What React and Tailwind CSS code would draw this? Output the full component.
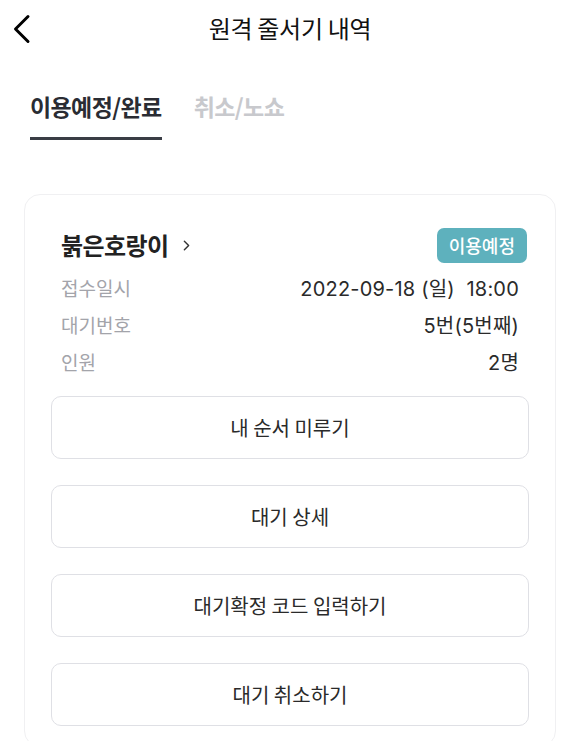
import { ChevronRight } from 'lucide-react';

export default function App() {
  const rows = [
    { label: '접수일시', value: '2022-09-18 (일)  18:00' },
    { label: '대기번호', value: '5번(5번째)' },
    { label: '인원', value: '2명' }
  ];
  const buttons = ['내 순서 미루기', '대기 상세', '대기확정 코드 입력하기', '대기 취소하기'];

  return (
    <div
      className="w-[580px] h-[741px] overflow-hidden bg-white text-[#222]"
      style={{ fontFamily: '"Noto Sans CJK KR", "Noto Sans", sans-serif' }}
    >
      {/* Header */}
      <div className="relative h-[56px] flex items-center justify-center">
        <button className="absolute left-[12px] top-[14px] text-black">
          <svg width="20" height="30" viewBox="0 0 20 30" fill="none" stroke="currentColor" strokeWidth="3" strokeLinecap="round" strokeLinejoin="round">
            <polyline points="16,2.5 3.5,15 16,27.5" />
          </svg>
        </button>
        <h1 className="text-[24px] font-normal tracking-[-0.3px] text-[#111]">원격 줄서기 내역</h1>
      </div>

      {/* Tabs */}
      <div className="flex gap-[32px] px-[30px] mt-[34px]">
        <div className="flex flex-col">
          <span className="text-[23px] font-bold leading-[32px] text-[#2a2c33] tracking-[-0.6px]">이용예정/완료</span>
          <div className="mt-[15px] h-[3px] bg-[#3a3d45]" />
        </div>
        <span className="text-[23px] font-bold leading-[32px] text-[#c8c9cd] tracking-[-0.6px]">취소/노쇼</span>
      </div>

      {/* Card */}
      <div className="mx-[24px] mt-[54px] border border-[#f0f0f2] rounded-[16px] px-[26px] pt-[32px] pb-[20px]">
        <div className="flex items-center justify-between pl-[10px] pr-[2px]">
          <div className="flex items-center gap-[10px]">
            <span className="text-[24px] font-bold tracking-[-0.6px]">붉은호랑이</span>
            <ChevronRight size={17} strokeWidth={2} className="text-[#333]" />
          </div>
          <span className="h-[35px] px-[12px] flex items-center rounded-[7px] bg-[#5eb1bd] text-white text-[18px] font-medium">
            이용예정
          </span>
        </div>

        <div className="mt-[10px] px-[10px] flex flex-col gap-[6px]">
          {rows.map(r => (
            <div key={r.label} className="flex items-center justify-between h-[31px]">
              <span className="text-[19px] text-[#a3a4aa]">{r.label}</span>
              <span
                className="text-[20px] font-normal text-[#2a2a2a] whitespace-pre tracking-[0.2px]"
                style={{ fontFamily: 'Inter, "Noto Sans CJK KR", sans-serif' }}
              >
                {r.value}
              </span>
            </div>
          ))}
        </div>

        <div className="mt-[18px] flex flex-col gap-[26px]">
          {buttons.map(b => (
            <button
              key={b}
              className="h-[63px] w-full border border-[#dfe0e5] rounded-[10px] text-[20px] text-[#2a2a2a]"
            >
              {b}
            </button>
          ))}
        </div>
      </div>
    </div>
  );
}
